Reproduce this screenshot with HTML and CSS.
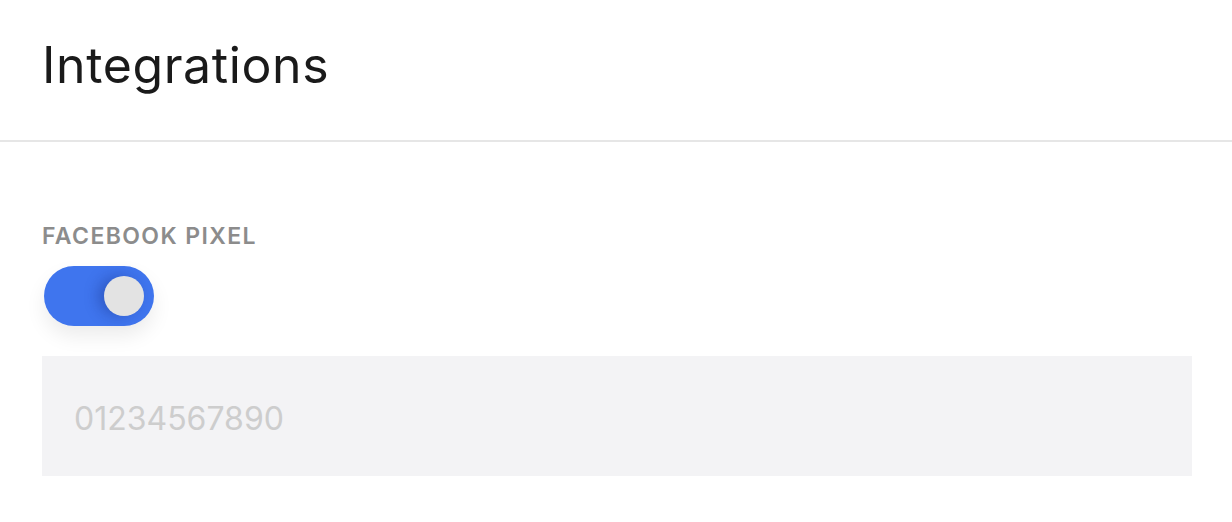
FILE: index.html
```html
<!DOCTYPE html>
<html>
<head>
<meta charset="utf-8">
<link rel="stylesheet" href="styles.css">
</head>
<body>
<header class="header">
  <h1 class="title">Integrations</h1>
</header>
<main class="content">
  <div class="label">FACEBOOK PIXEL</div>
  <div class="toggle"><div class="knob"></div></div>
  <div class="field"><span class="placeholder">01234567890</span></div>
</main>
</body>
</html>
```
FILE: styles.css
```css
html, body { margin: 0; padding: 0; background: #fff; }
body { font-family: Inter, "Noto Sans", sans-serif; width: 1232px; height: 522px; overflow: hidden; }
.header { height: 140px; border-bottom: 2px solid #e6e6e6; box-sizing: content-box; display: flex; align-items: center; padding-left: 42px; }
.title { margin: 0; font-size: 50px; font-weight: 400; color: #1a1a1a; line-height: 1; letter-spacing: 0.6px; position: relative; top: -5px; }
.content { padding: 0 40px 0 42px; display: flex; flex-direction: column; }
.label { margin-top: 81px; font-size: 23px; font-weight: 600; color: #8c8c8c; letter-spacing: 1.4px; line-height: 26px; height: 26px; }
.toggle { margin-top: 17px; margin-left: 2px; width: 110px; height: 60px; border-radius: 30px; background: #3f75ee; display: flex; align-items: center; justify-content: flex-end; padding-right: 10px; box-sizing: border-box; box-shadow: 0 10px 20px rgba(0,0,0,0.08); }
.knob { width: 40px; height: 40px; border-radius: 50%; background: #e3e3e3; box-shadow: -6px 0 14px rgba(20,40,120,0.35); }
.field { margin-top: 30px; height: 120px; box-sizing: border-box; background: #f3f3f5; display: flex; align-items: center; padding: 5px 0 0 32px; }
.placeholder { font-size: 32px; color: #cdcdcd; }
```
